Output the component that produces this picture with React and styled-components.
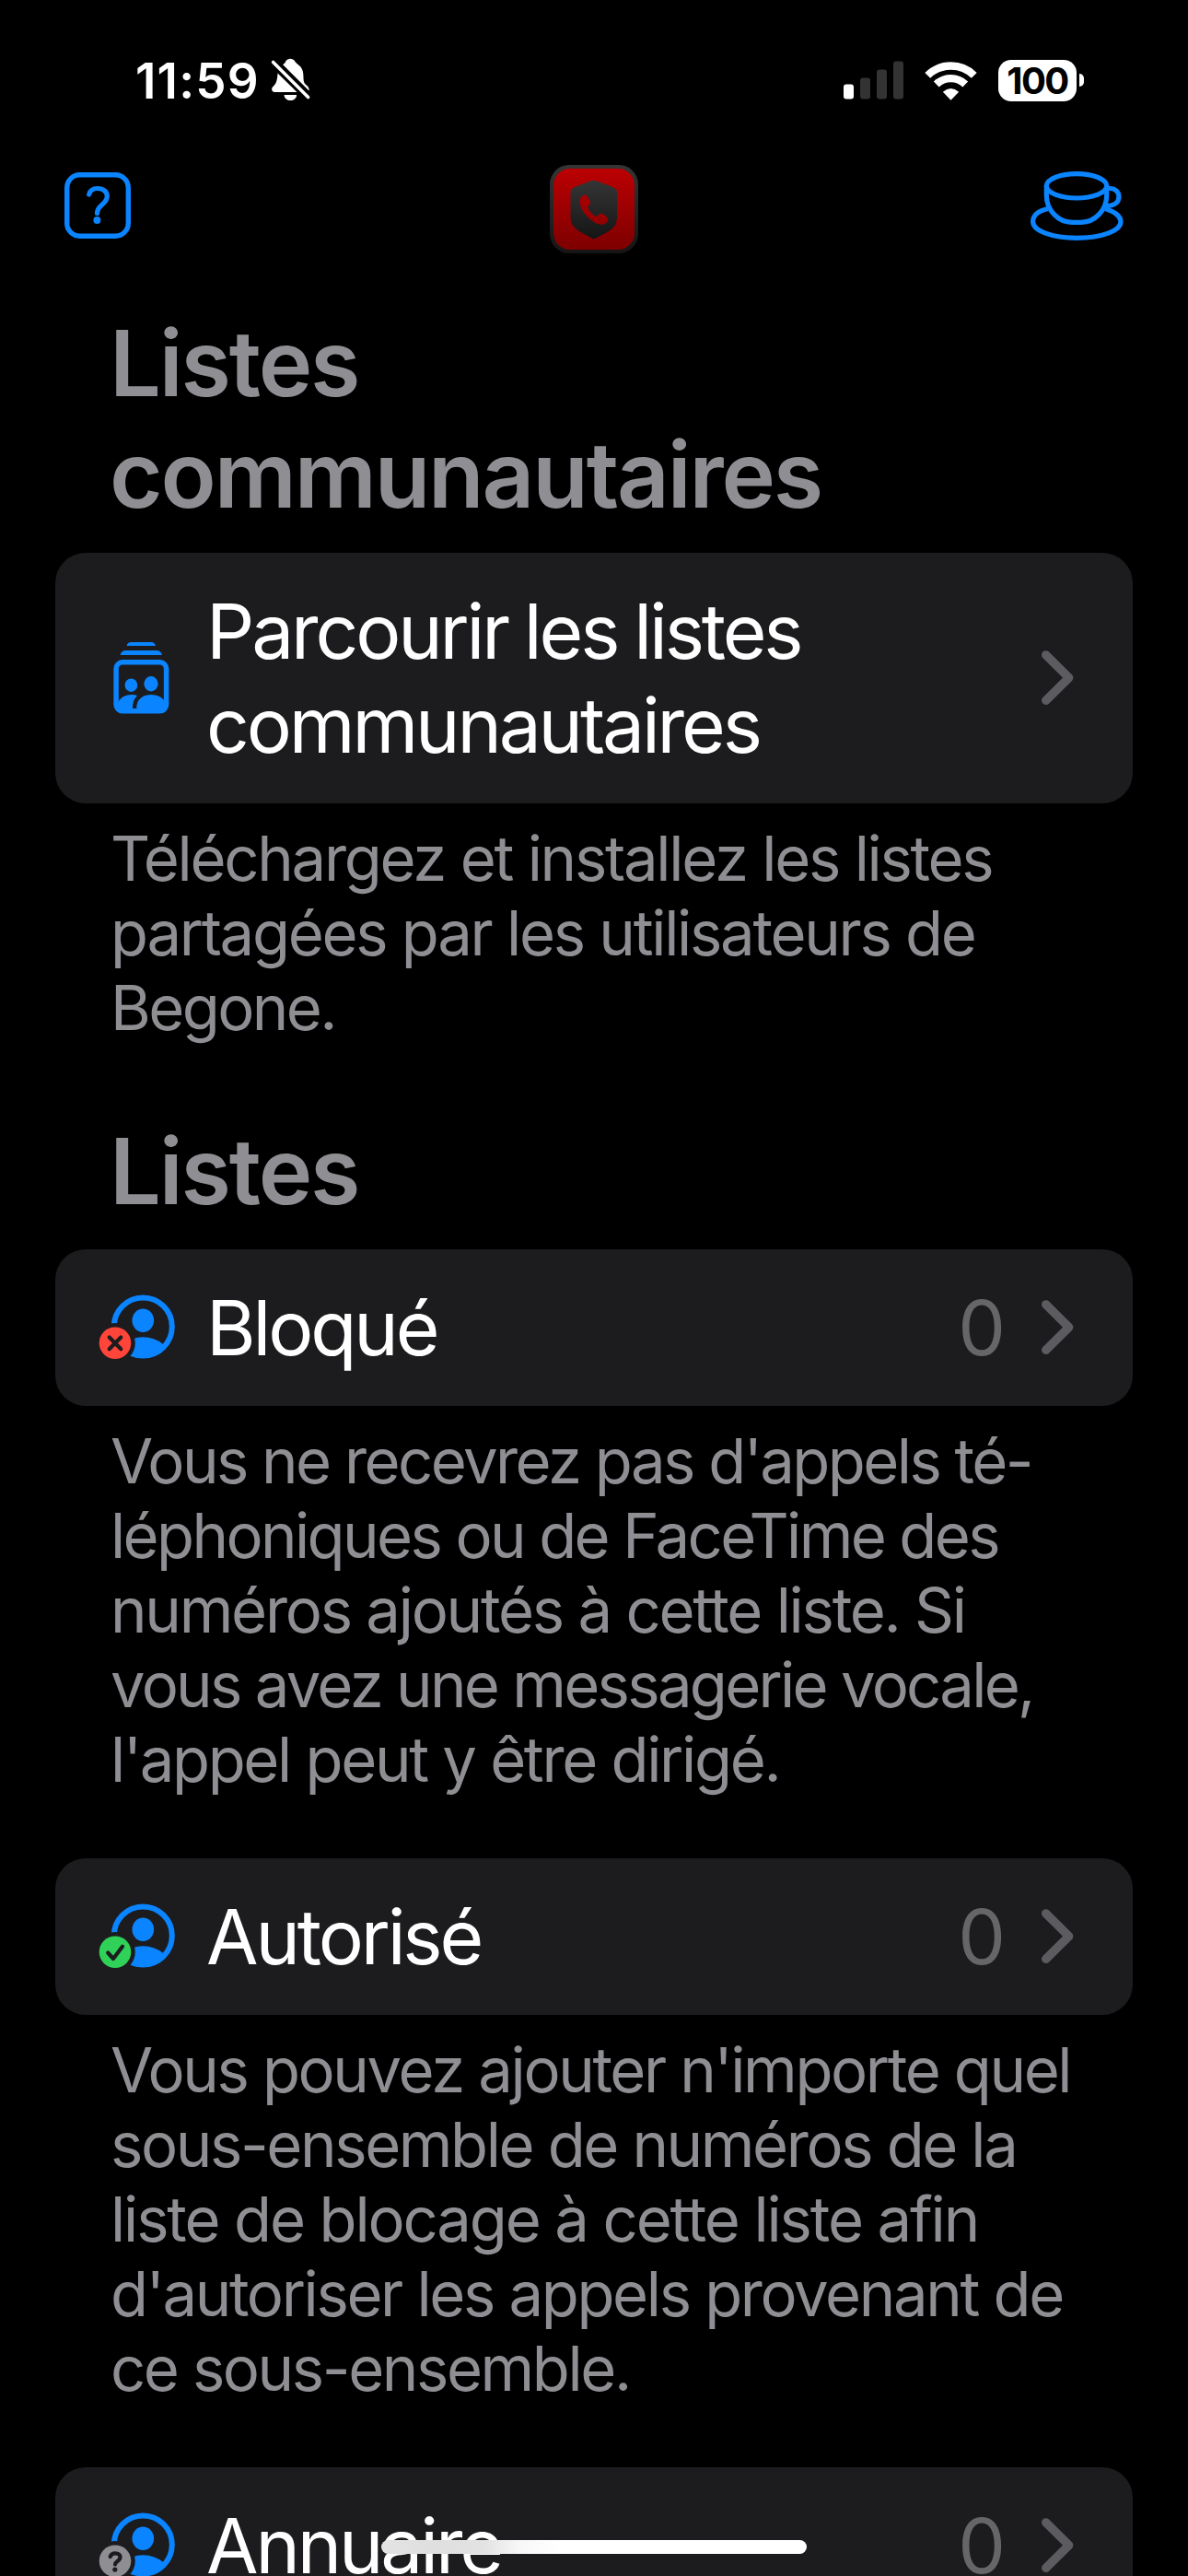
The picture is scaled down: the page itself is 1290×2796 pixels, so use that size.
import React from 'react';
import styled, { createGlobalStyle } from 'styled-components';

const GlobalStyle = createGlobalStyle`
  * {
    box-sizing: border-box;
  }

  body {
    margin: 0;
    background: #000;
    font-family: Inter, 'Liberation Sans', sans-serif;
  }

  svg {
    display: block;
    flex: none;
  }
`;

const Screen = styled.div`
  position: relative;
  width: 1290px;
  height: 2796px;
  overflow: hidden;
  background: #000;
  color: #fff;
`;

const StatusBar = styled.div`
  display: flex;
  align-items: center;
  justify-content: space-between;
  height: 174px;
  padding: 0 113px 0 147px;
`;

const StatusGroup = styled.div`
  display: flex;
  align-items: center;
  gap: ${(props) => props.$gap}px;
`;

const Time = styled.span`
  width: 134px;
  padding-top: 1px;
  font-size: 53px;
  font-weight: 600;
  line-height: 64px;
  letter-spacing: 1.2px;
  white-space: nowrap;
`;

const Battery = styled.div`
  display: flex;
  align-items: center;
  gap: 3px;
`;

const BatteryBody = styled.div`
  width: 85px;
  height: 45px;
  border-radius: 14px;
  background: #fff;
  color: #000;
  font-size: 40px;
  font-weight: 700;
  line-height: 45px;
  letter-spacing: -1.5px;
  text-align: center;
`;

const BatteryCap = styled.div`
  width: 5px;
  height: 14px;
  border-radius: 0 7px 7px 0;
  background: #fff;
`;

const NavBar = styled.header`
  display: flex;
  justify-content: space-between;
  height: 159px;
  padding: 5px 69px 0 70px;
`;

const Heading = styled.h2`
  margin: 0;
  padding: 1px 119px 24px;
  color: #8e8e93;
  font-size: 99px;
  font-weight: 600;
  line-height: 121px;
  letter-spacing: -2.15px;
  white-space: pre-line;
`;

const Card = styled.div`
  display: flex;
  align-items: center;
  margin: 0 60px;
  padding: 34px 64px 34px 40px;
  border-radius: 33px;
  background: #1c1c1e;
`;

const CardLabel = styled.span`
  flex: 1;
  padding: 1px 0 0 24px;
  margin-bottom: -1px;
  font-size: 82px;
  line-height: 102px;
  letter-spacing: -3.15px;
  word-spacing: -2px;
  white-space: pre-line;
`;

const Count = styled.span`
  padding-top: 1px;
  margin: 0 38px -1px 0;
  color: #666668;
  font-size: 82px;
  line-height: 102px;
`;

const Footer = styled.p`
  margin: 0;
  padding: 19px 0 ${(props) => props.$after}px 120px;
  color: #8e8e93;
  font-size: 67px;
  line-height: 81px;
`;

const Line = styled.span`
  display: block;
  letter-spacing: ${(props) => props.$spacing}px;
  white-space: nowrap;
`;

const HomeIndicator = styled.div`
  position: absolute;
  left: 414px;
  top: 2757px;
  width: 462px;
  height: 15px;
  border-radius: 8px;
  background: linear-gradient(90deg, #e3e3e3, #dfdfdf 12%, #e2e2e2 24%, #f8f8f8 33%, #fff 42%);
`;

const BellOff = () => (
  <svg width="44" height="48" viewBox="0 0 44 48" fill="#fff">
    <path d="M7.5 16.5 L28.5 37 H4.5 C1.2 37 .3 33.6 2 31.5 C5.5 28 7 26 7.5 16.5Z" />
    <path d="M13 7 C14.6 6.6 15.5 5.5 16.3 3.6 C18.5 -.2 24 -.2 26.2 3.6 C27 5.3 28.5 6 30.2 7.5 C38 13.5 34 22 36.5 27 C37.5 29 42.5 31 41.5 35.5Z" />
    <path d="M14.5 40 H28.2 C27.5 48 15.2 48 14.5 40Z" />
    <path d="M2.6 4.4 L40.6 42.5" stroke="#fff" strokeWidth="3.6" strokeLinecap="round" />
  </svg>
);

const Signal = () => (
  <svg width="65" height="42" viewBox="0 0 65 42" fill="#333">
    <rect x="0" y="25.5" width="11" height="16" rx="3" fill="#fff" />
    <rect x="18" y="18.5" width="11" height="23" rx="3" />
    <rect x="36" y="9.5" width="11" height="32" rx="3" />
    <rect x="54" y=".5" width="11" height="41" rx="3" />
  </svg>
);

const Wifi = () => (
  <svg width="57" height="43" viewBox="0 0 58 43" fill="none" stroke="#fff">
    <path d="M3.3 15.8 A36.5 36.5 0 0 1 54.7 15.8" strokeWidth="8.5" />
    <path d="M13 25.5 A23 23 0 0 1 45 25.5" strokeWidth="8.5" />
    <path d="M29 43 L20.2 34 Q29 26.5 37.8 34Z" fill="#fff" stroke="none" />
  </svg>
);

const HelpIcon = () => (
  <svg width="102" height="102" viewBox="0 0 102 102" fill="none" stroke="#0a84ff">
    <rect x="2.7" y="10.7" width="66.6" height="66.6" rx="14" strokeWidth="5.4" />
    <path
      d="M26.7 32 C28 26.5 32 25.5 36 25.5 C42 25.5 46.3 29 46.3 34 C46.3 43 35.5 43 35.5 52.5"
      strokeWidth="5.2"
      strokeLinecap="round"
      strokeLinejoin="round"
    />
    <circle cx="35.4" cy="60" r="4" fill="#0a84ff" stroke="none" />
  </svg>
);

const AppLogo = () => (
  <svg width="96" height="96" viewBox="0 0 96 96">
    <defs>
      <linearGradient id="frame" x1="0" y1="0" x2="0" y2="1">
        <stop offset="0" stopColor="#353535" />
        <stop offset="1" stopColor="#151515" />
      </linearGradient>
      <linearGradient id="red" x1="0" y1="0" x2="0" y2="96" gradientUnits="userSpaceOnUse">
        <stop offset="0" stopColor="#be0003" />
        <stop offset="1" stopColor="#7a0000" />
      </linearGradient>
    </defs>
    <rect width="96" height="96" rx="21" fill="url(#frame)" />
    <rect x="4" y="4" width="88" height="88" rx="18" fill="url(#red)" />
    <path
      d="M45 17.3 Q47.8 16 50.5 17.3 L69.5 24.5 Q73 26 73 29.5 V57 C73 69 63.5 72.5 49.5 79.7 Q47.8 80.8 46 79.7 C33 72.5 22.5 69 22.5 57 V29.5 Q22.5 26 26 24.5Z"
      fill="url(#frame)"
    />
    <path
      d="M33 37 C34.5 32.5 38.5 31 41 34.5 L44 39.5 Q45 41.5 42.7 43.5 C40.5 45.5 41 46 42.5 48.5 C44.5 51.5 46.5 54 49 55.5 Q51 56.5 52.5 54.5 Q55 51.5 58 53.5 L61.5 56 Q64.5 58.5 62.5 61.5 C59.5 66 55 65 51 63.5 C42.5 60 30 47 33 37Z"
      fill="url(#red)"
    />
  </svg>
);

const CupIcon = () => (
  <svg width="103" height="84" viewBox="0 0 103 84" fill="none" stroke="#0a84ff" strokeWidth="5.2">
    <ellipse cx="51" cy="22.8" rx="32.7" ry="13.2" />
    <path d="M18.3 22 V33 C18.3 49 31 62.3 46 62.3 H56 C71 62.3 83.7 49 83.7 33 V22" />
    <path d="M84 25.5 H87.5 C93 25.5 97 29.5 97 34.5 C97 41 92 44.5 83 44.5" />
    <path d="M20 47.5 C9 50 3.6 55 3.6 61.5 C3.6 71.5 24 79.3 51.3 79.3 C78.5 79.3 99 71.5 99 61.5 C99 56 92.5 51 82.5 47.5" />
  </svg>
);

const CommunityIcon = () => (
  <svg width="100" height="100" viewBox="0 0 100 100" fill="#0a84ff">
    <path d="M37.5 15 Q38.5 11 42.5 11 H64 Q68 11 69 15Z" />
    <path d="M30.5 25 Q32 20 36.5 20 H70 Q74.5 20 76 25Z" />
    <rect x="26.1" y="32.8" width="54.5" height="53" rx="7" fill="none" stroke="#0a84ff" strokeWidth="5.5" />
    <ellipse cx="42.4" cy="57.7" rx="6.8" ry="7.2" />
    <ellipse cx="64" cy="56.2" rx="7.6" ry="8.2" />
    <path d="M28 77 C31 70 38 67.5 44 68 Q47 68 49 69.3 C45 73 44 77 44 83 V86 H28Z" />
    <path d="M48.3 83 C48 74 54 68 64 68 C71 68 76 71 79 75 V86 H44 V83Z" />
  </svg>
);

const badges = {
  blocked: { color: '#ff453a', mark: 'M18.7 60.5 L31.3 73.3 M31.3 60.5 L18.7 73.3' },
  allowed: { color: '#30d158', mark: 'M17.2 67.5 L23 74 L33 60.7' },
  unknown: {
    color: '#8e8e93',
    mark: 'M19.7 62 C21 58.3 24 58.3 25.3 58.3 C28.3 58.3 30.5 60 30.5 62.5 C30.5 67 25 66.8 25 70.5',
  },
};

const PersonIcon = ({ status }) => (
  <svg width="100" height="100" viewBox="0 0 100 100">
    <defs>
      <mask id={`cut-${status}`}>
        <rect width="100" height="100" fill="#fff" />
        <circle cx="25" cy="66.7" r="21.8" fill="#000" />
      </mask>
      <clipPath id={`disc-${status}`}>
        <circle cx="55.3" cy="49" r="33" />
      </clipPath>
    </defs>
    <g mask={`url(#cut-${status})`} fill="#0a84ff">
      <circle cx="55.3" cy="49" r="31.5" fill="none" stroke="#0a84ff" strokeWidth="6" />
      <ellipse cx="55.3" cy="42.3" rx="11.8" ry="12.7" />
      <ellipse cx="55.3" cy="86" rx="30.4" ry="25.7" clipPath={`url(#disc-${status})`} />
    </g>
    <circle cx="25" cy="66.7" r="17.3" fill={badges[status].color} />
    <path
      d={badges[status].mark}
      fill="none"
      stroke="#1c1c1e"
      strokeWidth="4.2"
      strokeLinecap="round"
      strokeLinejoin="round"
    />
    {status === 'unknown' && <circle cx="24.8" cy="76" r="2.6" fill="#1c1c1e" />}
  </svg>
);

const Chevron = () => (
  <svg width="36" height="60" viewBox="0 0 36 60" fill="none">
    <path
      d="M5.7 4.9 L30.7 29.6 L5.7 54.3"
      stroke="#5b5b60"
      strokeWidth="9.4"
      strokeLinecap="round"
      strokeLinejoin="round"
    />
  </svg>
);

const Note = ({ lines, after }) => (
  <Footer $after={after}>
    {lines.map(([text, spacing]) => (
      <Line key={text} $spacing={spacing}>
        {text}
      </Line>
    ))}
  </Footer>
);

const ListRow = ({ status, label, count }) => (
  <Card>
    <PersonIcon status={status} />
    <CardLabel>{label}</CardLabel>
    <Count>{count}</Count>
    <Chevron />
  </Card>
);

// Each line carries its own tracking
const communityNote = [
  ['Téléchargez et installez les listes', -2.28],
  ['partagées par les utilisateurs de', -2.3],
  ['Begone.', -2.6],
];

const blockedNote = [
  ["Vous ne recevrez pas d'appels té-", -2.55],
  ['léphoniques ou de FaceTime des', -2.62],
  ['numéros ajoutés à cette liste. Si', -2.26],
  ['vous avez une messagerie vocale,', -2.72],
  ["l'appel peut y être dirigé.", -2.33],
];

const allowedNote = [
  ["Vous pouvez ajouter n'importe quel", -2.38],
  ['sous-ensemble de numéros de la', -2.4],
  ['liste de blocage à cette liste afin', -2.15],
  ["d'autoriser les appels provenant de", -2.36],
  ['ce sous-ensemble.', -2.42],
];

const App = () => {
  return (
    <Screen>
      <GlobalStyle />
      <StatusBar>
        <StatusGroup $gap={13}>
          <Time>11:59</Time>
          <BellOff />
        </StatusGroup>
        <StatusGroup $gap={23}>
          <Signal />
          <Wifi />
          <Battery>
            <BatteryBody>100</BatteryBody>
            <BatteryCap />
          </Battery>
        </StatusGroup>
      </StatusBar>

      <NavBar>
        <HelpIcon />
        <AppLogo />
        <CupIcon />
      </NavBar>

      {/* Community lists */}
      <Heading>{'Listes\ncommunautaires'}</Heading>
      <Card>
        <CommunityIcon />
        <CardLabel>{'Parcourir les listes\ncommunautaires'}</CardLabel>
        <Chevron />
      </Card>
      <Note lines={communityNote} after={76} />

      {/* Personal lists */}
      <Heading>Listes</Heading>
      <ListRow status="blocked" label="Bloqué" count={0} />
      <Note lines={blockedNote} after={67} />
      <ListRow status="allowed" label="Autorisé" count={0} />
      <Note lines={allowedNote} after={67} />
      <ListRow status="unknown" label="Annuaire" count={0} />

      <HomeIndicator />
    </Screen>
  );
};

export default App;
